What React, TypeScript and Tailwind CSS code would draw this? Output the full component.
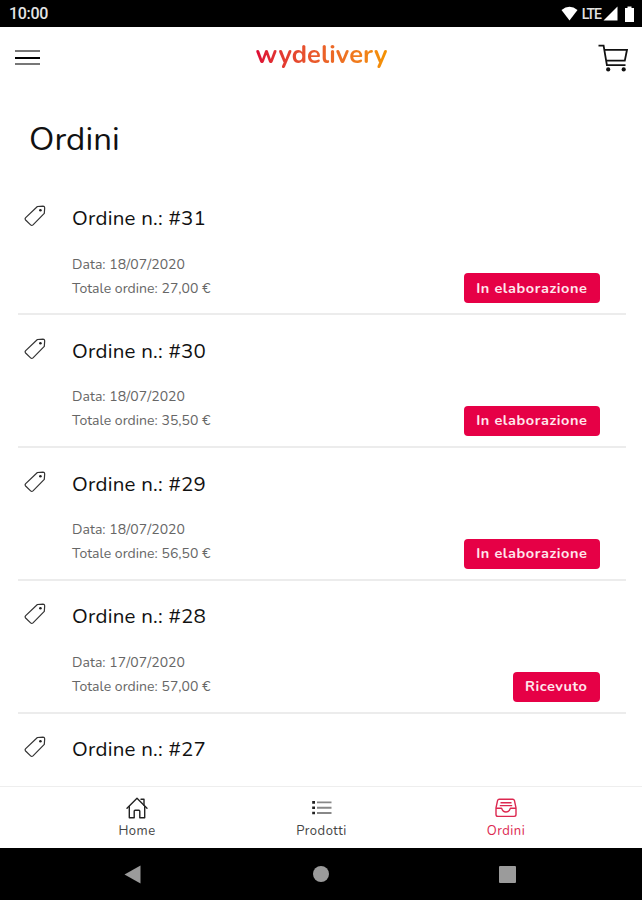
import { clsx } from 'clsx';

interface Order {
  id: number;
  date?: string;
  total?: string;
  status?: string;
}

const orders: Order[] = [
  { id: 31, date: '18/07/2020', total: '27,00 €', status: 'In elaborazione' },
  { id: 30, date: '18/07/2020', total: '35,50 €', status: 'In elaborazione' },
  { id: 29, date: '18/07/2020', total: '56,50 €', status: 'In elaborazione' },
  { id: 28, date: '17/07/2020', total: '57,00 €', status: 'Ricevuto' },
  { id: 27 },
];

function StatusBar() {
  return (
    <div className="flex h-[27px] shrink-0 items-center justify-between bg-black pl-[9px] pr-[7px]">
      <span className="pt-px font-[Roboto] text-base font-medium leading-none tracking-[-0.3px] text-[#e4e4e4]">10:00</span>
      <div className="flex items-center text-white">
        <svg className="h-[15px] w-[17px]" viewBox="0 0 17 15" fill="currentColor">
          <path d="M0.5 4 Q8.5 -2.5 16.5 4 L8.5 14.5 Z" />
        </svg>
        <span className="ml-1 font-[Roboto] text-sm font-medium leading-none tracking-[-1px] text-[#e4e4e4]">LTE</span>
        <svg className="ml-[2px] h-[15px] w-[15px]" viewBox="0 0 15 15" fill="currentColor">
          <path d="M14.5 0.5v14H0.5z" />
        </svg>
        <svg className="ml-[7px] mr-px h-4 w-[9px]" viewBox="0 0 9 16" fill="currentColor">
          <path d="M2.5 0.5h4v1.5H9V16H0V2h2.5z" />
        </svg>
      </div>
    </div>
  );
}

function CartIcon() {
  return (
    <svg className="h-7 w-[30px]" viewBox="0 0 30 28" fill="none" stroke="#111" strokeWidth="1.8">
      <path d="M0.5 1.6H5.6L8.9 21.2H27.5" />
      <path d="M6.4 5.8H29L26.8 16.6H8.2" />
      <circle cx="10.2" cy="25.4" r="2.1" fill="#111" stroke="none" />
      <circle cx="25.7" cy="25.4" r="2.1" fill="#111" stroke="none" />
    </svg>
  );
}

function Header() {
  return (
    <header className="flex h-[61px] shrink-0 items-center justify-between pl-[15px] pr-[14px]">
      <div className="flex w-[30px] flex-col gap-[4.5px]">
        <span className="h-[2px] w-[25px] bg-[#777]" />
        <span className="h-[2px] w-[25px] bg-black" />
        <span className="h-[2px] w-[25px] bg-[#777]" />
      </div>
      <h1 className="bg-gradient-to-r from-[#dd0734] to-[#f49200] bg-clip-text pb-[6px] text-[25.5px] font-bold leading-8 tracking-[0.1px] text-transparent">
        wydelivery
      </h1>
      <CartIcon />
    </header>
  );
}

function TagIcon() {
  return (
    <svg className="h-[22px] w-[22px]" viewBox="0 0 22 22" fill="none" stroke="#333" strokeWidth="1.2" strokeLinejoin="round">
      <path d="M13.4 1.5L19 1.2Q20.6 1.2 20.7 2.8L20.3 8.4L9 19.9Q7.8 21 6.6 19.9L1.6 15Q0.6 13.8 1.7 12.7Z" />
      <circle cx="16.4" cy="5.3" r="1.3" fill="#222" stroke="none" />
    </svg>
  );
}

function OrderRow({ order }: { order: Order }) {
  return (
    <li className="flex h-[132.8px] shrink-0 border-b-2 border-[#ececec] pl-[6px] pr-[26px]">
      <div className="w-12 shrink-0 pt-[22.5px]">
        <TagIcon />
      </div>
      <div className="flex-1 pt-[21.5px]">
        <h3 className="text-[20.5px] leading-7 tracking-[0.25px] text-[#111]">Ordine n.: #{order.id}</h3>
        {order.date && <p className="mt-[20.5px] text-[14px] leading-6 tracking-[0.06px] text-[#666]">Data: {order.date}</p>}
        {order.total && <p className="text-[14px] leading-6 tracking-[0.04px] text-[#666]">Totale ordine: {order.total}</p>}
      </div>
      {order.status && (
        <span className="mb-[10px] flex h-[30px] items-center self-end rounded-[4px] bg-[#e60046] pl-3 pr-[12.5px] text-[14.5px] font-bold tracking-[0.57px] text-[#ffe6ec]">
          {order.status}
        </span>
      )}
    </li>
  );
}

function HomeIcon() {
  return (
    <svg className="h-[22px] w-[22px]" viewBox="0 0 22 22" fill="none" stroke="#222" strokeWidth="1.4" strokeLinejoin="round" strokeLinecap="round">
      <path d="M1 11.3L11 1.3L21 11.3" />
      <path d="M15 2.3H18V8.2" />
      <path d="M3.3 9.5V20.7H8.2V14.2Q8.2 13.3 9.1 13.3H12.9Q13.8 13.3 13.8 14.2V20.7H18.7V9.5" />
    </svg>
  );
}

function ListIcon() {
  return (
    <svg className="h-[22px] w-[22px]" viewBox="0 0 22 22">
      <path d="M6 5.4H20.5M6 10.7H20.5M6 16H20.5" stroke="#888" strokeWidth="1.9" />
      <path d="M1.2 5.4H4M1.2 10.7H4M1.2 16H4" stroke="#222" strokeWidth="2.6" />
    </svg>
  );
}

function InboxIcon() {
  return (
    <svg className="h-[22px] w-[22px]" viewBox="0 0 22 22" fill="none" stroke="#dc2850" strokeWidth="1.4" strokeLinejoin="round">
      <path d="M1 10.8L2.6 3.4Q3 2.2 4.2 2.2H17.8Q19 2.2 19.4 3.4L21 10.8V17.6Q21 19.4 19.2 19.4H2.8Q1 19.4 1 17.6Z" />
      <path d="M1 11.3H6.6Q7.8 15 11 15T15.4 11.3H21" />
      <path d="M5.5 5.8H16.5M4.8 8.6H17.2" />
    </svg>
  );
}

const tabs = [
  { label: 'Home', icon: HomeIcon },
  { label: 'Prodotti', icon: ListIcon },
  { label: 'Ordini', icon: InboxIcon, active: true },
];

function TabBar() {
  return (
    <nav className="flex h-[62px] shrink-0 justify-center border-t border-[#eee] bg-white pl-px">
      {tabs.map(({ label, icon: Icon, active }) => (
        <div key={label} className={clsx('flex w-[184.5px] flex-col items-center pt-[10px] text-[13px] leading-6 tracking-[0.5px]', active ? 'text-[#dc2850]' : 'text-[#444]')}>
          <Icon />
          <span>{label}</span>
        </div>
      ))}
    </nav>
  );
}

function SystemNav() {
  return (
    <div className="flex h-[52px] shrink-0 items-center bg-black pl-[124px]">
      <svg className="h-[19px] w-[17px]" viewBox="0 0 17 19" fill="#9b9b9b">
        <path d="M16.5 0.5v18L0.5 9.5z" />
      </svg>
      <span className="ml-[172px] h-4 w-4 rounded-full bg-[#9b9b9b]" />
      <span className="ml-[170px] h-[17px] w-[17px] rounded-[1px] bg-[#9b9b9b]" />
    </div>
  );
}

export default function App() {
  return (
    <div className="flex h-[900px] w-[642px] flex-col overflow-hidden bg-white font-['Nunito','Open_Sans',sans-serif]">
      <StatusBar />
      <Header />
      <main className="flex min-h-0 flex-1 flex-col overflow-hidden">
        <h2 className="shrink-0 pl-[29px] pt-[29px] text-[33px] leading-[46px] tracking-[0.1px] text-[#111]">Ordini</h2>
        <ul className="ml-[18px] mr-4 mt-[19.6px]">
          {orders.map((order) => (
            <OrderRow key={order.id} order={order} />
          ))}
        </ul>
      </main>
      <TabBar />
      <SystemNav />
    </div>
  );
}
